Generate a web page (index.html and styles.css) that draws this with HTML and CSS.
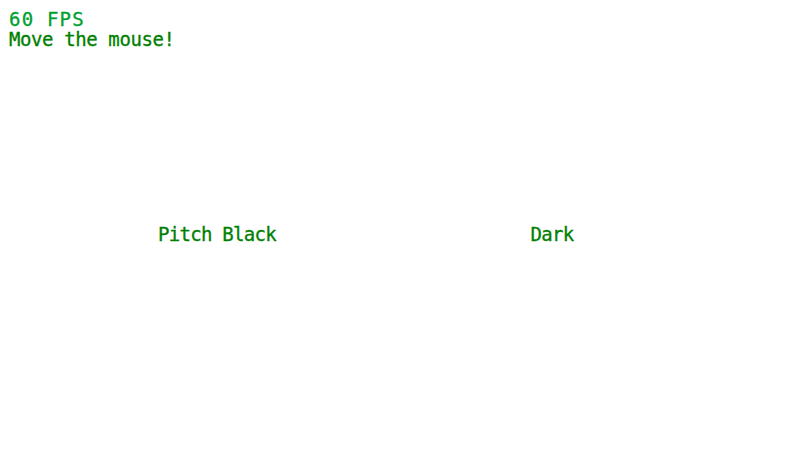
FILE: index.html
```html
<!DOCTYPE html>
<html lang="en">
<head>
    <meta charset="UTF-8">
    <meta name="viewport" content="width=device-width, initial-scale=1.0">
    <title>Lighting Demo</title>
    <link rel="stylesheet" href="styles.css">
</head>
<body>
    <div class="hud">
        <div class="fps">60 FPS</div>
        <div class="hint">Move the mouse!</div>
    </div>
    <div class="zones">
        <div class="zone">Pitch Black</div>
        <div class="zone">Dark</div>
    </div>
</body>
</html>
```

FILE: styles.css
```css
body { margin: 0; background: #fff; font-family: "DejaVu Sans Mono", monospace; font-size: 19px; color: #008000; -webkit-text-stroke: 0.3px currentColor; }
.hud { padding: 9px 0 0 9px; line-height: 20px; }
.fps { color: #00a030; letter-spacing: 1.2px; }
.hint { letter-spacing: -0.4px; }
.zones { display: flex; gap: 101px; margin: 175px 0 0 100px; line-height: 20px; }
.zone { width: 234px; text-align: center; letter-spacing: -0.7px; }
```
